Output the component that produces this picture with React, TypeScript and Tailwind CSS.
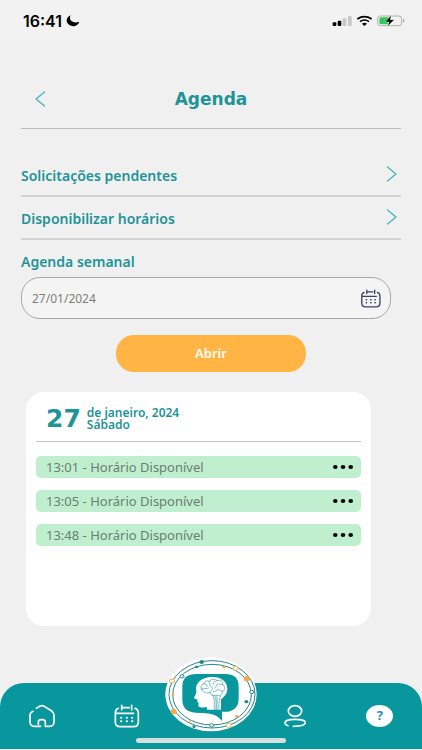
import { useState } from "react";

function StatusBar() {
  return (
    <div className="flex h-10 items-center justify-between bg-[#f2f2f2] pt-px pr-[17px] pl-[23px] text-black">
      <div className="flex items-center gap-1">
        <span className="font-['Inter',sans-serif] text-[16px] leading-5 font-semibold">16:41</span>
        <svg aria-hidden="true" className="h-3 w-[14px]" viewBox="205 46 42 36">
          <path fill="currentColor" d="M219 47C209 51 205 60 208 68C212 79 228 83 238 76C242 73 244 70 245 66C236 70 225 69 219 62C216 57 216 52 219 47Z" />
        </svg>
      </div>
      <div className="flex items-center">
        <svg aria-hidden="true" className="h-3 w-[73px]" viewBox="363 45 219 36">
          <g fill="currentColor">
            <rect x="365" y="67" width="11" height="11" rx="3" />
            <rect x="380" y="62" width="11" height="16" rx="3" />
          </g>
          <g fill="#c6c6c6">
            <rect x="395" y="55" width="11" height="23" rx="3" />
            <rect x="411" y="48" width="11" height="30" rx="3" />
          </g>
          <g fill="none" stroke="currentColor" strokeWidth="5">
            <path d="M439 57Q460 43 482 57" />
            <path d="M447 65Q460 55 474 65" />
          </g>
          <path fill="currentColor" d="M453 71Q460 66 468 71L460 78Z" />
          <rect x="500" y="48" width="72" height="29" rx="8" fill="none" stroke="#a3a3a3" strokeWidth="2.5" />
          <path d="M576 57Q580 59 580 62.500Q580 66 576 68Z" fill="#9b9b9b" />
          <path d="M511 52H532V73H511Q505 73 505 68V57Q505 52 511 52Z" fill="#34c759" />
          <path d="M541 45L522 66H534L529 80L550 59H538Z" fill="currentColor" stroke="#f2f2f2" strokeWidth="1.500" />
        </svg>
      </div>
    </div>
  );
}

function Chevron({ left = false }: { left?: boolean }) {
  return (
    <svg aria-hidden="true" className="h-4 w-[11px]" viewBox="0 0 11 16" fill="none" stroke="#3fb8b8" strokeWidth="1.300" strokeLinecap="round" strokeLinejoin="round">
      <path d={left ? "M9.500 1L1 8L9.500 15" : "M1.500 1L10 8L1.500 15"} />
    </svg>
  );
}

function CalendarIcon({ className }: { className: string }) {
  return (
    <svg aria-hidden="true" className={className} viewBox="344 160 76 72" fill="none" stroke="currentColor" strokeWidth="5" strokeLinecap="round">
      <path d="M356 173Q347 176 347 187V214Q347 228 361 228H402Q416 228 416 214V187Q416 176 406 173" />
      <path d="M366 164V177M396 164V177M366 171H389M349 188H402" />
      <path strokeWidth="6" d="M364 201H365M381 201H382M397 201H398M364 212H365M381 212H382M397 212H398" />
    </svg>
  );
}

function HomeIcon() {
  return (
    <svg aria-hidden="true" className="h-6 w-7" viewBox="86 160 84 72" fill="none" stroke="currentColor" strokeWidth="5" strokeLinecap="round" strokeLinejoin="round">
      <path d="M101 182Q92 186 92 194V214Q92 227 105 227H124" />
      <path d="M111 173L122 166Q128 163 135 167L157 181Q164 186 164 194V214Q164 227 150 227H138V215Q138 207 130 207H125Q117 207 117 215V221" />
    </svg>
  );
}

function PersonIcon() {
  return (
    <svg aria-hidden="true" className="h-6 w-6" viewBox="64 160 72 72" fill="none" stroke="currentColor" strokeWidth="5" strokeLinecap="round">
      <ellipse cx="100" cy="181" rx="20" ry="16" />
      <path d="M79 225Q70 222 70 216Q70 206 100 206Q131 206 131 216Q131 226 95 227" />
    </svg>
  );
}

function BrainLogo() {
  return (
    <svg aria-hidden="true" className="h-[75px] w-[92px]" viewBox="46 20 276 225">
      <ellipse cx="184" cy="132" rx="137" ry="111" fill="#fff" />
      <g fill="none" stroke="#27878d" strokeWidth="3">
        <ellipse cx="187" cy="132" rx="129" ry="101" />
        <ellipse cx="187" cy="133" rx="118" ry="91" />
      </g>
      <path fill="#07979c" d="M141 71H226Q267 71 267 108V147Q267 178 236 184H217V212Q204 194 181 190Q160 187 138 187Q98 184 98 148V108Q98 71 141 71Z" />
      <path fill="#fff" d="M187 80C214 79 233 94 233 115C233 132 222 139 214 147V178H172V171C163 171 149 173 146 167L147 158L142 154L144 148L133 144C134 137 141 132 140 123C135 98 154 81 187 80Z" />
      <g fill="none" stroke="#329ca1" strokeWidth="2" strokeLinecap="round">
        <path d="M157 119C150 111 156 100 163 101C163 92 174 89 179 93C184 85 198 86 202 91C213 87 222 96 219 103C228 109 226 120 219 123C220 133 207 139 199 134C190 139 181 132 181 126C174 130 160 127 157 119Z" />
        <path d="M163 101C169 99 174 103 172 109M157 116C164 110 170 118 177 113M179 93C182 99 177 105 185 109C192 112 187 119 181 126M202 91C196 96 191 94 190 101M219 103C211 104 209 98 203 102C197 105 202 112 196 114M219 123C211 123 210 114 203 119C197 124 194 121 190 125" />
        <path d="M188 133C195 143 194 155 194 178M195 136C201 146 199 160 199 178M202 137V178M213 137C206 146 208 159 208 178" />
      </g>
      <g fill="#27878d">
        <ellipse cx="156" cy="35" rx="7" ry="6" />
        <ellipse cx="141" cy="50" rx="5" ry="4" />
        <ellipse cx="290" cy="154" rx="6" ry="5" />
        <ellipse cx="133" cy="229" rx="5" ry="4" />
      </g>
      <g fill="#f4aa45">
        <ellipse cx="291" cy="85" rx="9" ry="8" />
        <ellipse cx="72" cy="184" rx="9" ry="8" />
        <ellipse cx="223" cy="50" rx="5" ry="4" />
        <ellipse cx="70" cy="133" rx="4" ry="4" />
        <ellipse cx="261" cy="198" rx="5" ry="4" />
        <ellipse cx="122" cy="211" rx="4" ry="3" />
      </g>
      <g fill="#fff" strokeWidth="3">
        <g stroke="#f4aa45">
          <ellipse cx="258" cy="54" rx="8" ry="6" />
          <ellipse cx="67" cy="92" rx="8" ry="6" />
          <ellipse cx="237" cy="225" rx="8" ry="6" />
        </g>
        <g stroke="#27878d">
          <ellipse cx="97" cy="78" rx="6" ry="5" />
          <ellipse cx="306" cy="125" rx="6" ry="5" />
          <ellipse cx="186" cy="225" rx="6" ry="5" />
        </g>
      </g>
    </svg>
  );
}

function MenuLink({ label }: { label: string }) {
  return (
    <a href="#" className="flex h-[43px] items-start justify-between border-b-2 border-[#d2d2d2] pt-3 pr-1">
      <span className="leading-5">{label}</span>
      <Chevron />
    </a>
  );
}

function Slot({ time }: { time: string }) {
  return (
    <li className="flex h-[22px] items-center justify-between rounded-[5px] bg-[#bfefcf] pr-2 pl-[10px] text-[13px] text-[#6c7d72]">
      <span className="pt-px">{time} - Horário Disponível</span>
      <button type="button" aria-label={`Opções ${time}`}>
        <svg aria-hidden="true" className="h-1 w-5" viewBox="0 0 20 4" fill="#000">
          <ellipse cx="2.300" cy="2" rx="2.300" ry="2" />
          <ellipse cx="10" cy="2" rx="2.300" ry="2" />
          <ellipse cx="17.700" cy="2" rx="2.300" ry="2" />
        </svg>
      </button>
    </li>
  );
}

function BottomNav() {
  return (
    <nav className="relative mt-auto mb-px grid h-[66px] grid-cols-5 items-center justify-items-center rounded-t-[24px] bg-[#07979c] text-white">
      <a href="#" aria-label="Início"><HomeIcon /></a>
      <a href="#" aria-label="Agenda"><CalendarIcon className="h-6 w-[26px]" /></a>
      <a href="#" aria-label="Principal" className="-mt-11"><BrainLogo /></a>
      <a href="#" aria-label="Perfil"><PersonIcon /></a>
      <a href="#" className="flex h-[22px] w-[27px] items-center justify-center rounded-[50%] bg-white text-[13px] font-bold text-[#3489bd]">?</a>
      <div className="absolute bottom-[6px] left-1/2 h-[5px] w-[150px] -translate-x-1/2 rounded-full bg-[#d5dfe0]" />
    </nav>
  );
}

export default function App() {
  const [date, setDate] = useState("27/01/2024");
  return (
    <div className="flex min-h-screen flex-col bg-[#f0f0f0] font-['Noto_Sans',sans-serif] text-[#1f9498]">
      <StatusBar />
      <main className="px-[21px] pb-8">
        <header className="mt-[30px] grid h-[59px] grid-cols-[40px_1fr_40px] items-center border-b border-[#bdbdbd]">
          <button type="button" aria-label="Voltar" className="justify-self-start pl-[14px]"><Chevron left /></button>
          <h1 className="pt-[2px] text-center font-['DejaVu_Sans',sans-serif] text-[17px] font-bold">Agenda</h1>
        </header>
        <div className="mt-[25px] text-[14px] font-semibold">
          <MenuLink label="Solicitações pendentes" />
          <MenuLink label="Disponibilizar horários" />
        </div>
        <label htmlFor="agenda-date" className="mt-3 block text-[14px] leading-5 font-semibold">Agenda semanal</label>
        <div className="mt-[5px] mr-[10px] flex h-[42px] items-center rounded-[19px] border border-[#a8a8a8] bg-[#f4f4f4] pr-[9px] pl-[10px]">
          <input id="agenda-date" value={date} onChange={(e) => setDate(e.target.value)} className="min-w-0 flex-1 pt-px text-[12px] text-[#7d7d7d] outline-none" />
          <button type="button" aria-label="Abrir calendário" className="text-[#3f3d64]"><CalendarIcon className="h-[19px] w-5" /></button>
        </div>
        <button type="button" className="mx-auto mt-4 block h-[37px] w-[190px] rounded-[18px] bg-[#ffb443] pt-px text-[13px] font-semibold text-white">Abrir</button>
        <section className="mt-5 mr-[30px] ml-[5px] min-h-[234px] rounded-[18px] bg-white px-[10px] pb-5">
          <div className="flex h-[50px] items-center gap-[6px] border-b border-[#c4c4c4] pt-1 pl-[10px]">
            <span className="font-['DejaVu_Sans',sans-serif] text-[25px] leading-6 font-bold">27</span>
            <div className="text-[12px] leading-3 font-semibold">
              <p>de janeiro, 2024</p>
              <p>Sábado</p>
            </div>
          </div>
          <ul className="mt-[14px] flex flex-col gap-3">
            <Slot time="13:01" />
            <Slot time="13:05" />
            <Slot time="13:48" />
          </ul>
        </section>
      </main>
      <BottomNav />
    </div>
  );
}
